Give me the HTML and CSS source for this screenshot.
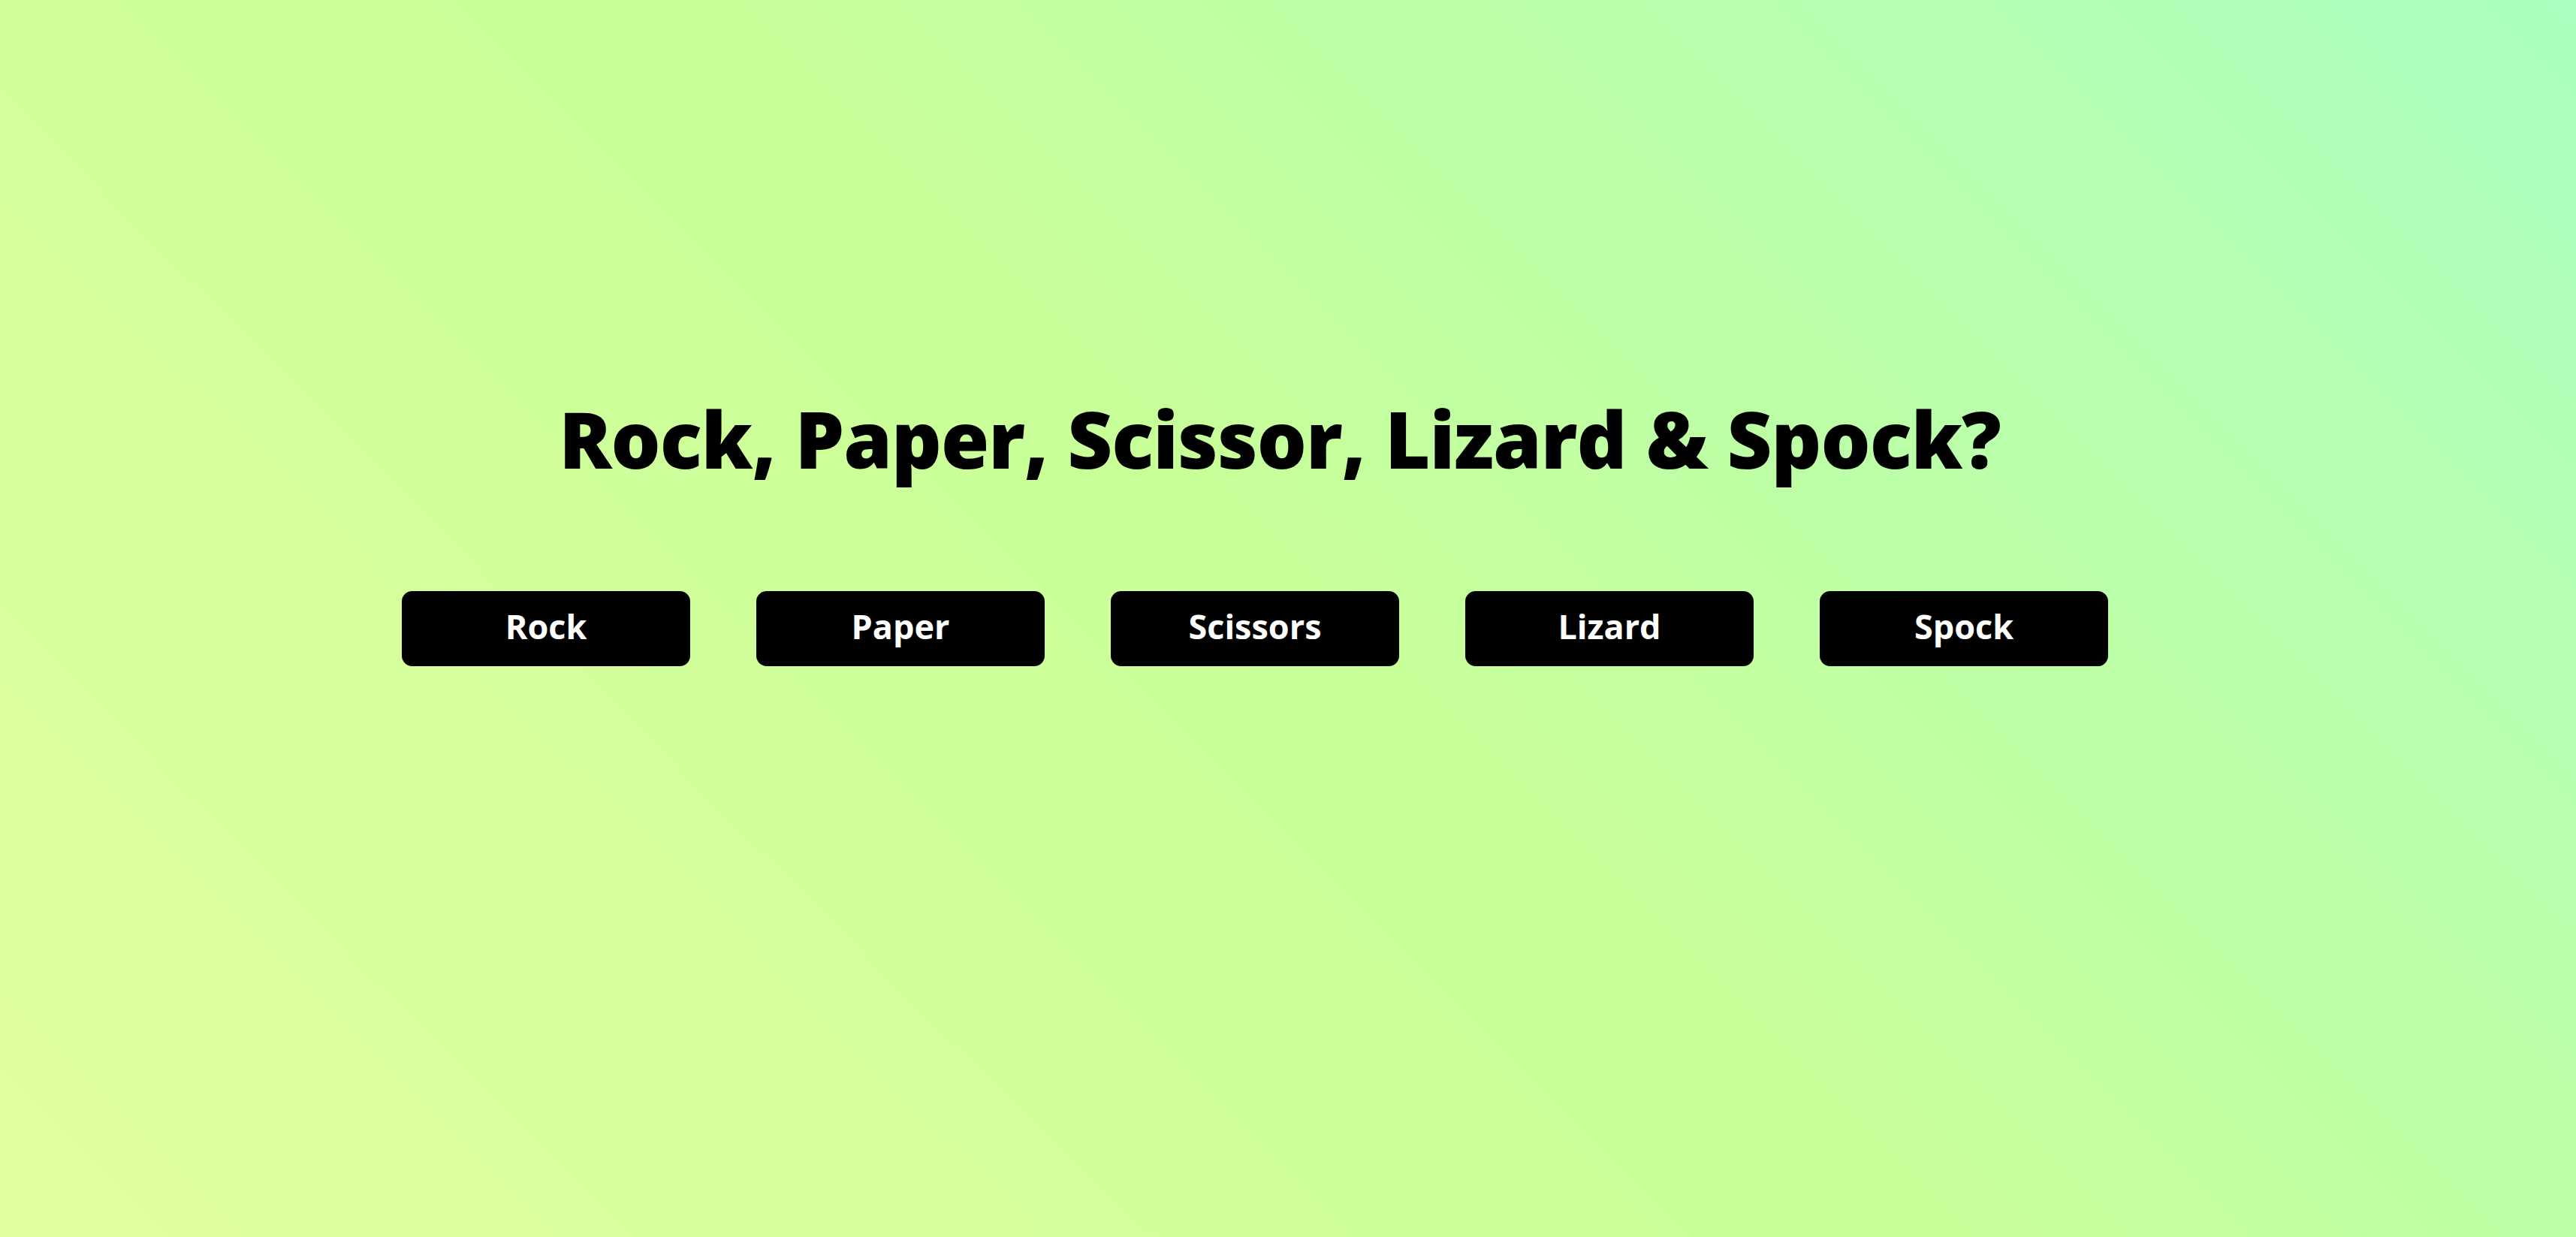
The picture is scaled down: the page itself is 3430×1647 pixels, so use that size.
FILE: index.html
```html
<!DOCTYPE html>
<html lang="en">
<head>
<meta charset="utf-8">
<title>Rock, Paper, Scissor, Lizard &amp; Spock?</title>
<link rel="stylesheet" href="styles.css">
</head>
<body>
<main class="game">
  <h1 class="title">Rock, Paper, Scissor, Lizard &amp; Spock?</h1>
  <div class="choices">
    <button class="choice">Rock</button>
    <button class="choice">Paper</button>
    <button class="choice">Scissors</button>
    <button class="choice">Lizard</button>
    <button class="choice">Spock</button>
  </div>
</main>
</body>
</html>
```

FILE: styles.css
```css
html, body {
  margin: 0;
  padding: 0;
  height: 100%;
}

body {
  background: linear-gradient(45deg, #e2ffa0 0%, #c8ff98 50%, #aaffc0 100%);
  font-family: "Open Sans", "Noto Sans", sans-serif;
  color: #000;
}

.game {
  display: flex;
  flex-direction: column;
  align-items: center;
  padding-top: 522px;
}

.title {
  margin: 0;
  padding-right: 22px;
  font-size: 104px;
  line-height: 1.2;
  font-weight: 800;
  letter-spacing: -1px;
}

.choices {
  display: flex;
  justify-content: center;
  margin-top: 140px;
}

.choice {
  width: 384px;
  height: 100px;
  margin-right: 88px;
  border: none;
  border-radius: 14px;
  background: #000;
  color: #fff;
  font-family: "Open Sans", "Noto Sans", sans-serif;
  font-size: 45px;
  font-weight: 700;
  padding: 0 0 6px 0;
  cursor: pointer;
}
```
